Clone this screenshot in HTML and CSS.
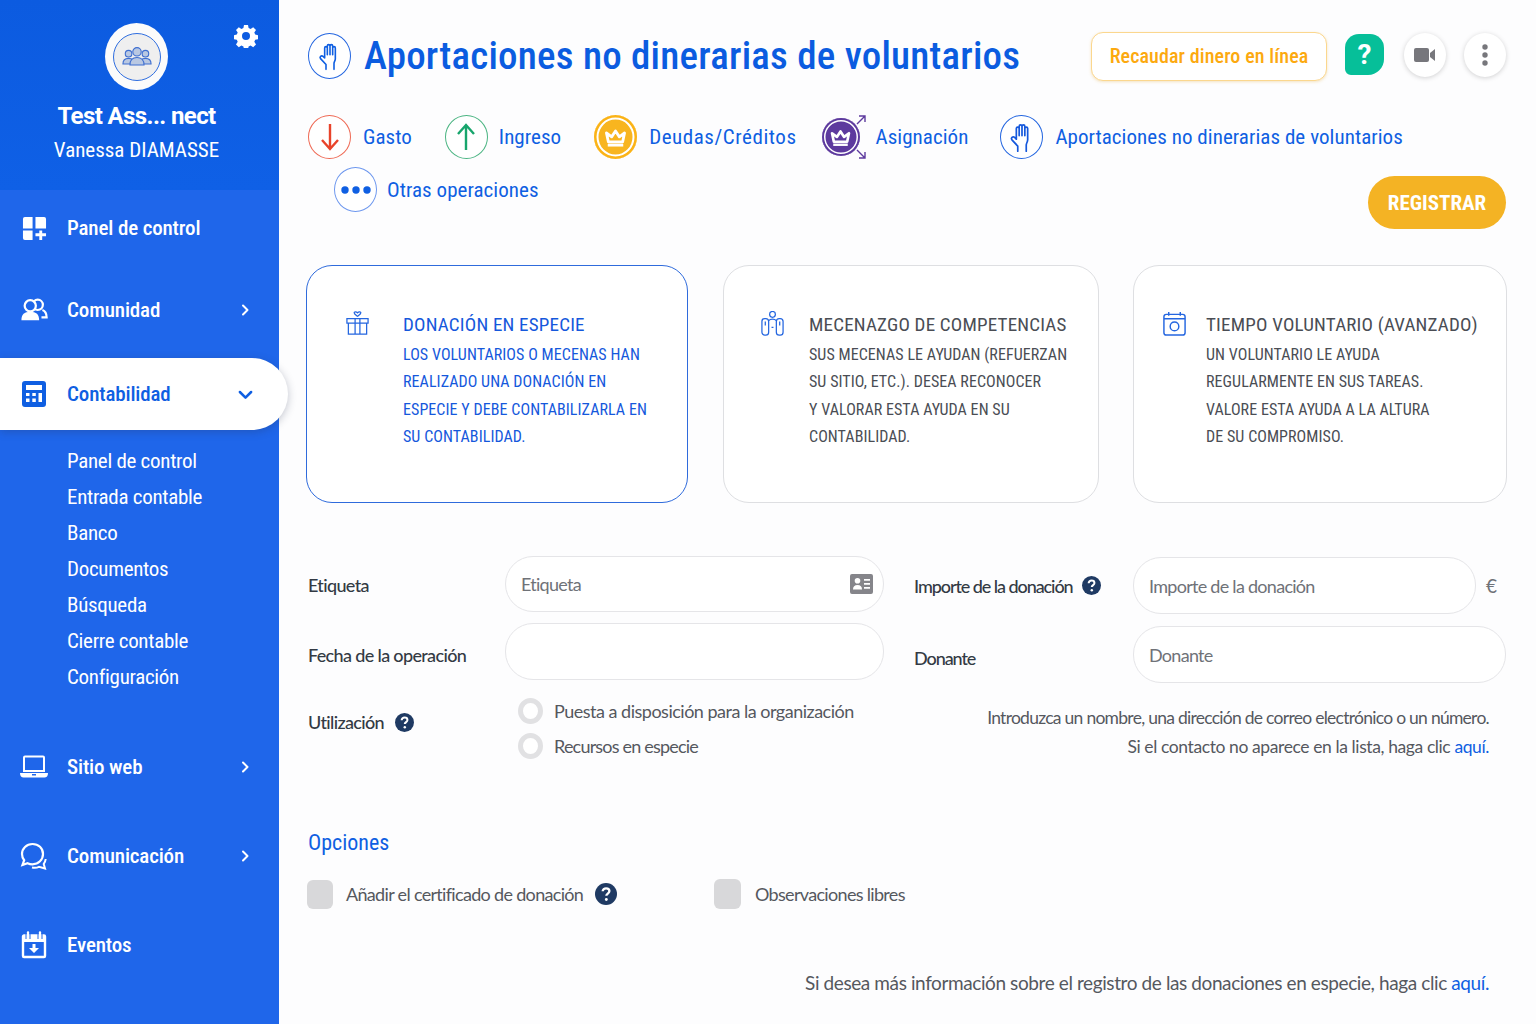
FILE: index.html
```html
<!DOCTYPE html>
<html lang="es">
<head>
    <meta charset="UTF-8">
    <meta name="viewport" content="width=device-width, initial-scale=1.0">
    <title>Aportaciones no dinerarias de voluntarios</title>
    <link rel="stylesheet" href="styles.css">
</head>
<body>

<svg class="sprite" aria-hidden="true">
    <symbol id="hand" viewBox="0 0 24 24">
        <path d="M8 13.500V6a1 1 0 0 1 2 0v5M10 6V4.500a1 1 0 0 1 2 0V11M12 4.500a1 1 0 0 1 2 0V11M14 6a1 1 0 0 1 2 0v8c0 1.600-1 2.400-1 3.600V22M9 22v-3.600L4.900 14c-1-1.300.6-2.800 1.900-1.700L8 13.500" fill="none" stroke="currentColor" stroke-width="1.200" stroke-linecap="round" stroke-linejoin="round"/>
    </symbol>
    <symbol id="crown" viewBox="0 0 24 24">
        <path d="M5 8.500l4 3 3-4.500 3 4.500 4-3-1.500 7h-11z" fill="none" stroke="#fff" stroke-width="2.200" stroke-linejoin="round"/>
        <path d="M6 18h12" stroke="#fff" stroke-width="2"/>
    </symbol>
    <symbol id="help" viewBox="0 0 20 20">
        <circle cx="10" cy="10" r="10" fill="#1f3a63"/>
        <path d="M7 7.600c0-1.800 1.400-2.800 3.100-2.800 1.800 0 3 1 3 2.500 0 2.300-2.800 2.300-2.800 4.400" fill="none" stroke="#fff" stroke-width="2.100"/>
        <circle cx="10.300" cy="15" r="1.300" fill="#fff"/>
    </symbol>
    <symbol id="chevron" viewBox="0 0 12 12">
        <path d="M4 1.500L8.500 6 4 10.500" fill="none" stroke="currentColor" stroke-width="2" stroke-linecap="round" stroke-linejoin="round"/>
    </symbol>
</svg>

<div class="layout">
    <aside class="sidebar">
        <div class="profile">
            <svg class="gear" viewBox="0 0 24 24"><path fill="#fff" fill-rule="evenodd" d="M10 1h4l.6 3 2 .9 2.600-1.700 2.800 2.800-1.700 2.600.9 2 3 .6v4l-3 .6-.9 2 1.700 2.600-2.800 2.800-2.600-1.700-2 .9-.6 3h-4l-.6-3-2-.9-2.600 1.700-2.800-2.800 1.700-2.600-.9-2-3-.6v-4l3-.6.9-2L2 6l2.800-2.800 2.600 1.700 2-.9zM12 8a4 4 0 1 0 0 8 4 4 0 0 0 0-8z"/></svg>
            <div class="avatar">
                <div class="avatar-inner">
                    <svg width="30" height="21" viewBox="0 0 32 22">
                        <g fill="#b9c8e2" stroke="#3f6fd0" stroke-width="1.200">
                            <circle cx="7" cy="8" r="3.500"/><path d="M1 19c0-4 2.500-6 6-6s6 2 6 6z"/>
                            <circle cx="25" cy="8" r="3.500"/><path d="M19 19c0-4 2.500-6 6-6s6 2 6 6z"/>
                            <circle cx="16" cy="6" r="4.500"/><path d="M8.500 20c0-5 3-8 7.500-8s7.500 3 7.500 8z"/>
                        </g>
                    </svg>
                </div>
            </div>
            <div class="org-name">Test Ass... nect</div>
            <div class="user-name">Vanessa DIAMASSE</div>
        </div>
        <nav class="nav">
            <a class="nav-item nav-panel">
                <svg class="nav-icon" viewBox="0 0 26 26"><path fill="#fff" d="M3 1h8v12H1V3a2 2 0 0 1 2-2zM14 1h9a2 2 0 0 1 2 2v10H14zM1 15h10v10H3a2 2 0 0 1-2-2zM14 18h4v-3h3v3h4v3h-4v4h-3v-4h-4z"/></svg>
                <span>Panel de control</span>
            </a>
            <a class="nav-item nav-community">
                <svg class="nav-icon" viewBox="0 0 30 26"><g fill="none" stroke="#fff" stroke-width="2.400"><circle cx="19" cy="7.500" r="5.500"/><path d="M24 13c3 1 4.500 4 4.500 8H23"/></g><circle cx="11" cy="8.500" r="6" fill="#1f66ea" stroke="#fff" stroke-width="2.400"/><path d="M1.500 24c0-6 3-9 9.500-9s9.500 3 9.500 9z" fill="#fff"/></svg>
                <span>Comunidad</span>
                <svg class="nav-arrow"><use href="#chevron"/></svg>
            </a>
            <a class="nav-item nav-active">
                <svg class="nav-icon" viewBox="0 0 26 28"><path fill="#0f5fe2" fill-rule="evenodd" d="M4 1h18a3 3 0 0 1 3 3v20a3 3 0 0 1-3 3H4a3 3 0 0 1-3-3V4a3 3 0 0 1 3-3zm1 4v5h16V5zm0 8v3h3.500v-3zm6.300 0v3h3.500v-3zm6.200 0v9H21v-9zM5 18.500V22h3.500v-3.500zm6.300 0V22h3.500v-3.500z"/></svg>
                <span>Contabilidad</span>
                <svg class="nav-arrow nav-arrow-down"><use href="#chevron"/></svg>
            </a>
            <div class="subnav">
                <a>Panel de control</a>
                <a>Entrada contable</a>
                <a>Banco</a>
                <a>Documentos</a>
                <a>Búsqueda</a>
                <a>Cierre contable</a>
                <a>Configuración</a>
            </div>
            <a class="nav-item nav-low">
                <svg class="nav-icon" viewBox="0 0 28 24"><path fill="none" stroke="#fff" stroke-width="2" d="M4 16V2.500a1 1 0 0 1 1-1h18a1 1 0 0 1 1 1V16z"/><path fill="#fff" d="M0 18h28c0 3-1.500 4.500-3.500 4.500h-21C1.500 22.500 0 21 0 18z"/><path fill="#1f66ea" d="M12 19h4v1.500h-4z"/></svg>
                <span>Sitio web</span>
                <svg class="nav-arrow"><use href="#chevron"/></svg>
            </a>
            <a class="nav-item nav-low">
                <svg class="nav-icon" viewBox="0 0 28 28"><path fill="none" stroke="#fff" stroke-width="2.200" d="M12.500 2C6.500 2 2 6.500 2 12c0 2.500.8 4.500 2.200 6.200L2.500 23l5-1.800c1.500.7 3.200 1.100 5 1.100 6 0 10.500-4.500 10.500-10.300S18.500 2 12.500 2z"/><path fill="none" stroke="#fff" stroke-width="2" d="M12 25.500c2 .5 5 .3 7-.7l6 1.700-1.300-4.500c1-1.400 1.800-3 2-5"/></svg>
                <span>Comunicación</span>
                <svg class="nav-arrow"><use href="#chevron"/></svg>
            </a>
            <a class="nav-item nav-low">
                <svg class="nav-icon" viewBox="0 0 26 28"><path fill="none" stroke="#fff" stroke-width="2.400" d="M3 4.500h20a1 1 0 0 1 1 1V25a1 1 0 0 1-1 1H3a1 1 0 0 1-1-1V5.500a1 1 0 0 1 1-1z"/><path fill="#fff" d="M2 5h22v6H2zM11.500 13h3v4H18l-5 5-5-5h3.500z"/><path stroke="#fff" stroke-width="2.400" stroke-linecap="round" d="M7 1.500v5M19 1.500v5"/><path stroke="#1f66ea" stroke-width="1" d="M5 2v6M9 2v6M17 2v6M21 2v6"/></svg>
                <span>Eventos</span>
            </a>
        </nav>
    </aside>

    <main class="main">
        <header class="page-head">
            <span class="circle circle-title"><svg width="32" height="32"><use href="#hand"/></svg></span>
            <h1>Aportaciones no dinerarias de voluntarios</h1>
            <button class="btn-online">Recaudar dinero en línea</button>
            <span class="help-tile">?</span>
            <span class="round-btn">
                <svg width="22" height="14" viewBox="0 0 22 14"><rect width="15" height="14" rx="2" fill="#77777c"/><path d="M16 5l5-4v12l-5-4z" fill="#77777c"/></svg>
            </span>
            <span class="round-btn">
                <svg width="6" height="22" viewBox="0 0 6 22"><circle cx="3" cy="3" r="2.700" fill="#77777c"/><circle cx="3" cy="11" r="2.700" fill="#77777c"/><circle cx="3" cy="19" r="2.700" fill="#77777c"/></svg>
            </span>
        </header>

        <div class="ops-row">
            <a class="op op-gasto">
                <span class="circle circle-red"><svg width="24" height="30" viewBox="0 0 24 30"><path d="M12 2v25M4 18l8 9 8-9" fill="none" stroke="#e8432a" stroke-width="2.400"/></svg></span>
                <span>Gasto</span>
            </a>
            <a class="op op-ingreso">
                <span class="circle circle-green"><svg width="24" height="30" viewBox="0 0 24 30"><path d="M12 28V3M4 12l8-9 8 9" fill="none" stroke="#17a56c" stroke-width="2.400"/></svg></span>
                <span>Ingreso</span>
            </a>
            <a class="op op-deudas">
                <span class="circle circle-gold"><svg width="31" height="31"><use href="#crown"/></svg></span>
                <span>Deudas/Créditos</span>
            </a>
            <a class="op op-asignacion">
                <span class="assign-icon">
                    <span class="circle circle-purple"><svg width="29" height="29"><use href="#crown"/></svg></span>
                    <svg class="assign-arrow assign-up" width="10" height="10" viewBox="0 0 10 10"><path d="M1 9l8-8M3 1h6v6" fill="none" stroke="#5d3a9e" stroke-width="1.400"/></svg>
                    <svg class="assign-arrow assign-down" width="10" height="10" viewBox="0 0 10 10"><path d="M1 1l8 8M3 9h6V3" fill="none" stroke="#5d3a9e" stroke-width="1.400"/></svg>
                </span>
                <span>Asignación</span>
            </a>
            <a class="op op-aportes">
                <span class="circle circle-blue"><svg width="34" height="34"><use href="#hand"/></svg></span>
                <span>Aportaciones no dinerarias de voluntarios</span>
            </a>
        </div>
        <div class="ops-row ops-second">
            <a class="op">
                <span class="circle circle-more"><svg width="32" height="10" viewBox="0 0 32 10"><circle cx="5" cy="5" r="3.700"/><circle cx="16" cy="5" r="3.700"/><circle cx="27" cy="5" r="3.700"/></svg></span>
                <span>Otras operaciones</span>
            </a>
            <button class="btn-save">REGISTRAR</button>
        </div>

        <section class="cards">
            <article class="card card-active">
                <svg class="card-icon" viewBox="0 0 26 26"><path fill="none" stroke="currentColor" stroke-width="1.300" d="M13 5.500c-2-1.500-3.500-2.500-3.500-3.800C9.500.800 11.500.200 13 1.800c1.500-1.600 3.500-1 3.500-.1 0 1.300-1.500 2.300-3.500 3.800zM2 8h22v4.500H2zM3.500 12.500H22.500V24H3.500zM10.500 8v16M15.500 8v16"/></svg>
                <div>
                    <h3>DONACIÓN EN ESPECIE</h3>
                    <p>LOS VOLUNTARIOS O MECENAS HAN<br>REALIZADO UNA DONACIÓN EN<br>ESPECIE Y DEBE CONTABILIZARLA EN<br>SU CONTABILIDAD.</p>
                </div>
            </article>
            <article class="card card-skills">
                <svg class="card-icon" viewBox="0 0 26 26"><g fill="none" stroke="#2466e0" stroke-width="1.300"><circle cx="13" cy="3.500" r="3"/><rect x="2" y="8" width="7" height="17" rx="3"/><rect x="17" y="8" width="7" height="17" rx="3"/><path d="M9 10c2-2 6-2 8 0M5.500 11v4M20.500 11v4M12 17h2"/></g></svg>
                <div>
                    <h3>MECENAZGO DE COMPETENCIAS</h3>
                    <p>SUS MECENAS LE AYUDAN (REFUERZAN<br>SU SITIO, ETC.). DESEA RECONOCER<br>Y VALORAR ESTA AYUDA EN SU<br>CONTABILIDAD.</p>
                </div>
            </article>
            <article class="card card-time">
                <svg class="card-icon" viewBox="0 0 26 26"><g fill="none" stroke="#2466e0" stroke-width="1.500"><rect x="2" y="3.500" width="22" height="21.500" rx="2.500"/><path d="M2 8h22M7 1v4M19 1v4"/><circle cx="13" cy="16" r="4.500"/></g></svg>
                <div>
                    <h3>TIEMPO VOLUNTARIO (AVANZADO)</h3>
                    <p>UN VOLUNTARIO LE AYUDA<br>REGULARMENTE EN SUS TAREAS.<br>VALORE ESTA AYUDA A LA ALTURA<br>DE SU COMPROMISO.</p>
                </div>
            </article>
        </section>

        <section class="form">
            <div class="form-col form-left">
                <div class="form-row">
                    <label class="field-label">Etiqueta</label>
                    <div class="input input-card">
                        <span class="placeholder">Etiqueta</span>
                        <svg width="23" height="20" viewBox="0 0 23 20"><path fill="#85858a" fill-rule="evenodd" d="M2 0h19a2 2 0 0 1 2 2v16a2 2 0 0 1-2 2H2a2 2 0 0 1-2-2V2a2 2 0 0 1 2-2zm5.500 4a2.800 2.800 0 1 0 0 5.600 2.800 2.800 0 0 0 0-5.600zM3 15.500h9c0-3-1.500-4.500-4.500-4.500S3 12.500 3 15.500zM14 5v1.800h6V5zm0 4v1.800h6V9zm0 4v1.800h6V13z"/></svg>
                    </div>
                </div>
                <div class="form-row">
                    <label class="field-label">Fecha de la operación</label>
                    <div class="input"></div>
                </div>
                <div class="form-row form-row-use">
                    <label class="field-label">Utilización <svg class="help" width="19" height="19"><use href="#help"/></svg></label>
                    <div class="radios">
                        <div class="radio"><span class="radio-dot"></span>Puesta a disposición para la organización</div>
                        <div class="radio radio-short"><span class="radio-dot"></span>Recursos en especie</div>
                    </div>
                </div>
            </div>
            <div class="form-col form-right">
                <div class="form-row">
                    <label class="field-label">Importe de la donación <svg class="help" width="19" height="19"><use href="#help"/></svg></label>
                    <div class="input input-amount"><span class="placeholder">Importe de la donación</span></div>
                    <span class="euro">€</span>
                </div>
                <div class="form-row">
                    <label class="field-label">Donante</label>
                    <div class="input"><span class="placeholder">Donante</span></div>
                </div>
                <p class="hint">Introduzca un nombre, una dirección de correo electrónico o un número.<br><span class="hint-second">Si el contacto no aparece en la lista, haga clic <a>aquí.</a></span></p>
            </div>
        </section>

        <section class="options">
            <h2>Opciones</h2>
            <div class="checks">
                <div class="check check-cert"><span class="box"></span>Añadir el certificado de donación <svg class="help" width="22" height="22"><use href="#help"/></svg></div>
                <div class="check"><span class="box box-wide"></span>Observaciones libres</div>
            </div>
        </section>

        <p class="foot-note">Si desea más información sobre el registro de las donaciones en especie, haga clic <a>aquí.</a></p>
    </main>
</div>

</body>
</html>
```

FILE: styles.css
```css
/* page */
* { box-sizing: border-box; }
body { margin: 0; height: 1024px; overflow: hidden; background: #fdfdfe; font-family: "Lato", sans-serif; color: #3a4048; }
.sprite { display: none; }
.layout { display: flex; height: 1024px; }

/* sidebar */
.sidebar { width: 279px; flex-shrink: 0; background: #1f66ea; color: #fff; font-family: "Roboto", sans-serif; position: relative; z-index: 2; }
.profile { height: 190px; background: linear-gradient(#0c5be0, #0f60e6); position: relative; padding: 23px 6px 0 0; text-align: center; }
.gear { position: absolute; top: 24px; right: 21px; width: 24px; height: 24px; }
.avatar { width: 63px; height: 67px; margin: 0 auto; border-radius: 50%; background: #fbfbfb; display: flex; align-items: center; justify-content: center; }
.avatar-inner { width: 48px; height: 48px; border-radius: 50%; border: 1px solid #2f6ee0; background: #efefef; display: flex; align-items: center; justify-content: center; }
.org-name { font-size: 24px; font-weight: 700; margin-top: 9px; line-height: 34px; letter-spacing: -0.600px; }
.user-name { font-size: 21px; line-height: 34px; font-stretch: 87%; }

.nav-item { display: flex; align-items: center; font-size: 21px; font-weight: 500; padding-left: 20px; font-stretch: 87%; letter-spacing: -0.150px; }
.nav-icon { width: 28px; height: 28px; margin-right: 19px; flex-shrink: 0; }
.nav-arrow { width: 12px; height: 12px; margin-left: auto; margin-right: 28px; color: #fff; }
.nav-arrow-down { transform: rotate(90deg); width: 15px; height: 15px; margin-right: 35px; color: #0f5fe2; }
.nav-panel { height: 78px; padding: 0 0 2px 22px; }
.nav-panel .nav-icon { width: 25px; height: 25px; margin-right: 20px; }
.nav-community { height: 84px; }
.nav-active { height: 72px; margin: 6px -9px 0 0; background: #fff; color: #0f5fe2; border-radius: 0 36px 36px 0; box-shadow: 0 2px 8px rgba(40, 50, 80, .28); }
.nav-low { height: 89px; }
.subnav { display: flex; flex-direction: column; padding: 13px 0 27px 67px; font-size: 21px; line-height: 36px; font-stretch: 87%; letter-spacing: -0.300px; }

/* main */
.main { flex: 1; padding: 0 30px 0 29px; min-width: 0; }
.page-head { display: flex; align-items: center; height: 112px; margin-bottom: 3px; }
.page-head h1 { margin: 0 0 0 13px; font: 500 39px "Roboto", sans-serif; font-stretch: 87%; letter-spacing: 0.220px; color: #0b5ce0; white-space: nowrap; }
.circle { display: flex; align-items: center; justify-content: center; width: 43px; height: 44px; border-radius: 50%; border: 1.500px solid #2466e0; flex-shrink: 0; color: #0f5fe2; background: #fff; }
.circle-title { height: 46px; }
.btn-online { margin-left: auto; width: 236px; height: 49px; border: 1.500px solid #fbd78e; border-radius: 12px; background: #fff; color: #fca90f; font: 500 20px "Roboto", sans-serif; font-stretch: 87%; letter-spacing: 0.100px; box-shadow: 0 1px 3px rgba(230, 180, 80, .35); padding: 0; }
.help-tile { margin: 0 0 3px 18px; width: 39px; height: 41px; background: #06bf99; border-radius: 14px 14px 16px 6px; color: #fff; font: 700 28px "Roboto", sans-serif; display: flex; align-items: center; justify-content: center; }
.round-btn { margin: 0 0 2px 20px; width: 42px; height: 44px; border-radius: 50%; background: #fff; box-shadow: 0 1px 5px rgba(0, 0, 0, .18); display: flex; align-items: center; justify-content: center; }
.round-btn + .round-btn { margin-left: 18px; }

.ops-row { display: flex; align-items: center; color: #0f5fe2; font: 400 21px "Roboto", sans-serif; font-stretch: 87%; letter-spacing: 0.050px; }
.op { display: flex; align-items: center; gap: 11px; white-space: nowrap; }
.op-gasto { gap: 12px; }
.ops-row .op-ingreso { margin-left: 33px; }
.ops-row .op-deudas { margin-left: 33px; gap: 12px; }
.ops-row .op-asignacion { margin-left: 25px; gap: 10px; }
.ops-row .op-aportes { margin-left: 32px; gap: 12px; }
.op-deudas span:last-child { letter-spacing: 0.550px; }
.circle-red { border-color: #ef6a55; }
.circle-green { border-color: #4cb583; }
.circle-gold { background: #f8b51f; border: 0; box-shadow: inset 0 0 0 2.500px #fbb316, inset 0 0 0 4.500px #fff; }
.circle-purple { width: 38px; height: 38px; background: #5d3a9e; border: 0; box-shadow: inset 0 0 0 2px #5d3a9e, inset 0 0 0 3.500px #fff; }
.circle-blue { color: #1558dc; }
.circle-more { width: 43px; height: 45px; border-color: #6d97ee; }
.circle-more svg { fill: #0f5fe2; }
.assign-icon { position: relative; width: 44px; height: 44px; display: flex; align-items: center; }
.assign-arrow { position: absolute; right: 0; }
.assign-up { top: 0; }
.assign-down { bottom: 0; }

.ops-second { margin-top: 8px; justify-content: space-between; padding-left: 26px; align-items: flex-start; }
.ops-second .op { gap: 10px; }
.btn-save { width: 138px; height: 53px; margin-top: 9px; border: 0; border-radius: 27px; background: #f4b324; color: #fff; font: 700 21px "Roboto", sans-serif; font-stretch: 87%; padding: 0; }

/* cards */
.cards { display: grid; grid-template-columns: 382px 376px 373px; column-gap: 35px; margin: 36px 0 0 -2px; }
.card { height: 238px; display: flex; border: 1px solid #dedfe2; border-radius: 26px; background: #fff; padding: 42px 0 0 36px; color: #4a4d54; font-family: "Roboto", sans-serif; }
.card-active { border: 1.500px solid #2f6bdc; color: #1558dc; padding-left: 38px; }
.card-skills { padding-left: 36px; }
.card-time { margin-left: -1px; padding-left: 28px; }
.card-icon { width: 25px; height: 25px; flex-shrink: 0; margin: 3px 33px 0 0; }
.card-skills .card-icon { margin-right: 24px; }
.card-time .card-icon { margin-right: 19px; }
.card h3 { margin: 0; font-size: 19px; font-weight: 400; line-height: 34px; font-stretch: 87%; letter-spacing: 0.200px; white-space: nowrap; }
.card p { margin: -1px 0 0; font-size: 16px; line-height: 27.400px; font-stretch: 87%; letter-spacing: 0.070px; white-space: nowrap; }
.card-active .card-icon { color: #2466e0; }

/* form */
.form { display: flex; margin-top: 53px; }
.form-col { display: flex; flex-direction: column; }
.form-left { width: 576px; }
.form-right { width: 592px; margin: 1px 0 0 30px; }
.form-row { display: flex; align-items: center; }
.form-row + .form-row { margin-top: 11px; }
.form-right .form-row + .form-row { margin-top: 12px; }
.form-row:nth-child(2) .field-label { padding-top: 6px; }
.form-left .form-row:first-child .field-label { padding-top: 2px; }
.field-label { flex-shrink: 0; display: flex; align-items: center; gap: 11px; font-size: 18px; font-weight: 500; letter-spacing: -0.650px; color: #333a44; }
.form-left .field-label { width: 197px; }
.form-right .field-label { width: 219px; gap: 9px; letter-spacing: -1.070px; }
.input { flex: 1; height: 57px; border: 1.500px solid #e5e5e8; border-radius: 28px; background: #fff; display: flex; align-items: center; justify-content: space-between; padding: 0 10px 0 15px; }
.input-card { height: 56px; }
.placeholder { font-size: 18px; color: #6f7278; letter-spacing: -0.720px; }
.euro { width: 30px; padding-left: 10px; font-size: 19px; color: #6f7278; }
.form-row-use { align-items: flex-start; }
.form-row-use .field-label { margin-top: 20px; }
.radios { margin: 2px 0 0 13px; }
.radio { display: flex; align-items: center; height: 35px; gap: 11px; font-size: 18px; letter-spacing: -0.500px; color: #55585e; white-space: nowrap; }
.radio-short { letter-spacing: -0.800px; }
.radio-dot { width: 25px; height: 26px; border-radius: 50%; border: 5px solid #e1e1e3; background: #fff; }
.hint { margin: 20px 17px 0 0; text-align: right; font-size: 17.500px; letter-spacing: -0.730px; line-height: 29px; color: #55585e; white-space: nowrap; }
.hint-second { letter-spacing: -0.400px; }
.hint a, .foot-note a { color: #0f5fe2; }

/* options */
.options h2 { margin: 65px 0 0; font: 400 22px/30px "Roboto", sans-serif; font-stretch: 87%; color: #0f5fe2; }
.checks { display: flex; align-items: center; margin-top: 21px; font-size: 18px; letter-spacing: -0.680px; color: #55585e; }
.check { display: flex; align-items: center; gap: 13px; }
.check-cert { width: 407px; margin-left: -1px; }
.check .help { margin-left: -1px; }
.box { width: 26px; height: 29px; border-radius: 6px; background: #d8d8da; }
.box-wide { width: 27px; height: 30px; margin-right: 1px; }
.foot-note { margin: 62px 17px 0 0; text-align: right; font-size: 19px; letter-spacing: -0.400px; color: #55585e; white-space: nowrap; }
```
